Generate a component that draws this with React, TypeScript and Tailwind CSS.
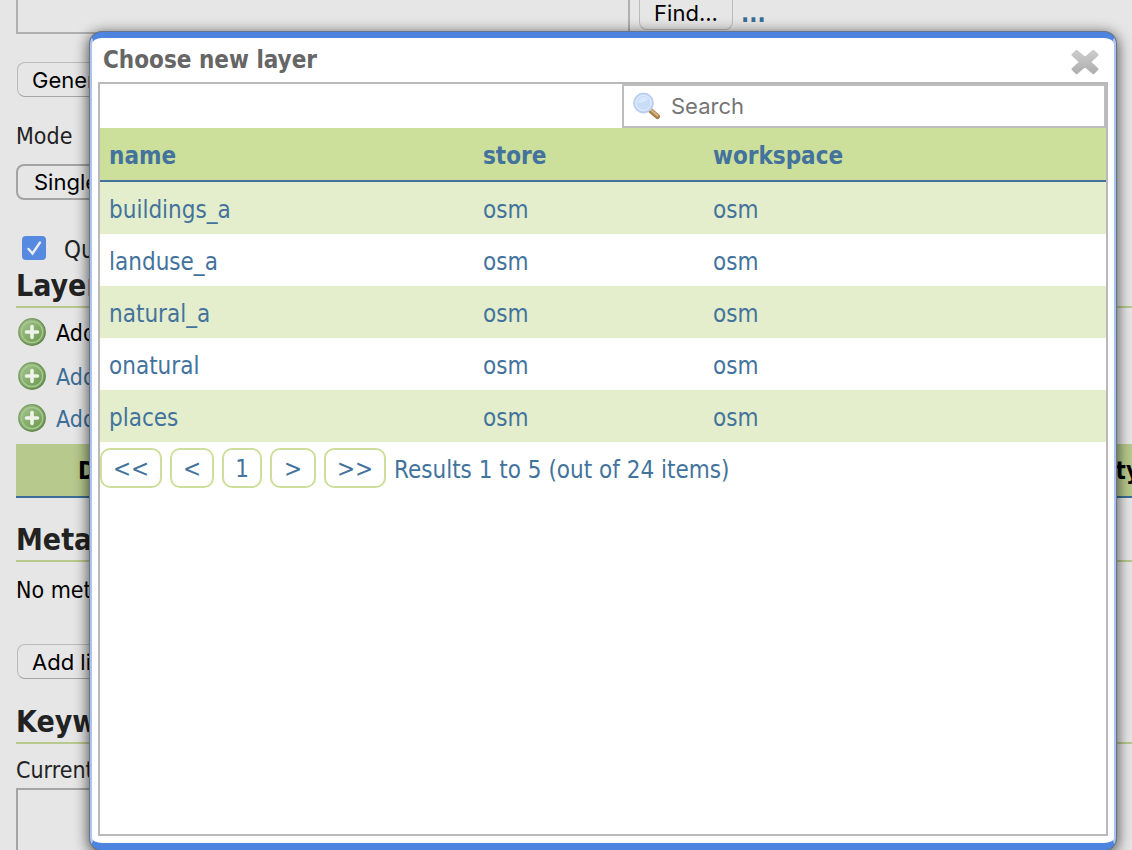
import type { ReactNode } from "react";

const ui = "font-['Inter',sans-serif]";
const layers = ["buildings_a", "landuse_a", "natural_a", "onatural", "places"];
const pages = [
  { label: "<<", width: "w-[62px]" },
  { label: "<", width: "w-11" },
  { label: "1", width: "w-10" },
  { label: ">", width: "w-[46px]" },
  { label: ">>", width: "w-[62px]" },
];

function PlusIcon() {
  return (
    <svg width="28" height="28" viewBox="0 0 28 28" aria-hidden="true">
      <defs>
        <linearGradient id="plusFill" x1="0" y1="0" x2="1" y2="1">
          <stop offset="0" stopColor="#a3c48c" />
          <stop offset="1" stopColor="#69984b" />
        </linearGradient>
        <linearGradient id="plusRing" x1="0" y1="0" x2="1" y2="1">
          <stop offset="0" stopColor="#86aa70" />
          <stop offset="1" stopColor="#5a8142" />
        </linearGradient>
      </defs>
      <circle cx="14" cy="14" r="13.2" fill="url(#plusFill)" stroke="url(#plusRing)" strokeWidth="1.4" />
      <circle cx="14" cy="14" r="10.6" fill="url(#plusFill)" stroke="#a9c896" strokeWidth="1.2" />
      <path d="M14 8.500v11M8.500 14h11" stroke="#eff3ec" strokeWidth="3.600" strokeLinecap="round" />
    </svg>
  );
}

function SearchIcon() {
  return (
    <svg width="28" height="28" viewBox="0 0 28 28" className="shrink-0" aria-hidden="true">
      <path d="M17.5 18.5l7 6" stroke="#a9804c" strokeWidth="5" strokeLinecap="round" />
      <path d="M17.5 17.5l7 5.900" stroke="#d7b689" strokeWidth="2" strokeLinecap="round" />
      <circle cx="10.500" cy="11" r="9.400" fill="#c3d9f6" stroke="#bccff0" strokeWidth="2" />
      <circle cx="10.500" cy="11" r="7.600" fill="#c8dcf7" stroke="#dfeafb" strokeWidth="1.400" />
      <path d="M5 11a6 6 0 0 1 10-4.500c-2 3.500-5.500 4.500-10 4.500z" fill="#d9e7fa" />
    </svg>
  );
}

function CloseIcon() {
  return (
    <svg width="30" height="28" viewBox="0 0 30 28" aria-hidden="true">
      <defs>
        <linearGradient id="closeFill" x1="0" y1="0" x2="0" y2="28" gradientUnits="userSpaceOnUse">
          <stop offset="0" stopColor="#d0d0d0" />
          <stop offset="1" stopColor="#ababab" />
        </linearGradient>
      </defs>
      <path
        d="M6.500 3L15 10.200l8.500-7.200 3.800 3.800L19.500 14l7.800 7.200-3.800 3.800L15 17.800 6.500 25l-3.800-3.800L10.500 14 2.700 6.800z"
        fill="url(#closeFill)"
        stroke="url(#closeFill)"
        strokeWidth="2.400"
        strokeLinejoin="round"
      />
    </svg>
  );
}

function Heading({ children }: { children: ReactNode }) {
  return (
    <h2 className="h-11 border-b-2 border-[#b7c98c] text-[30px] leading-[44px] font-bold text-[#222]">{children}</h2>
  );
}

function PageButton({ children }: { children: ReactNode }) {
  return (
    <button
      className={`${ui} ml-px block h-[35px] rounded-lg border border-[#bababa] border-b-[#a5a5a5] px-[14px] text-[22px] leading-8 text-black`}
    >
      {children}
    </button>
  );
}

function BackgroundPage() {
  return (
    <main className="pl-4">
      <div className="flex h-[34px] items-start">
        <textarea
          aria-label="Coordinate reference system"
          className="h-[34px] w-[614px] resize-none border-2 border-t-0 border-[#b0b0b0] bg-transparent"
        />
        <button
          className={`${ui} ml-[9px] h-[30px] w-[94px] rounded-b-lg border border-t-0 border-[#bababa] pb-1 text-[22px] leading-6 text-black`}
        >
          Find...
        </button>
        <a href="#crs" className="ml-2 text-2xl leading-7 font-bold text-[#3b6d96]">
          ...
        </a>
      </div>

      <div className="mt-7">
        <PageButton>Generate Bounds</PageButton>
      </div>

      <label htmlFor="mode" className="mt-5 block h-[35px] text-[23px] leading-[38px] text-[#222]">
        Mode
      </label>
      <select
        id="mode"
        defaultValue="Single"
        className={`${ui} mt-3 block h-9 w-48 appearance-none rounded-lg border-2 border-[#a3a3a3] bg-transparent px-4 text-[22px] leading-8 text-black`}
      >
        <option>Single</option>
      </select>

      <div className="mt-8 flex h-8 items-center pl-1.5">
        <span className="relative flex size-6">
          <input
            id="queryable"
            type="checkbox"
            defaultChecked
            className="size-6 appearance-none rounded-[4px] bg-[#5689e0]"
          />
          <svg viewBox="0 0 24 24" className="pointer-events-none absolute inset-0 size-6" aria-hidden="true">
            <path d="M6.500 13l4 4.500L18 6.500" fill="none" stroke="#ececec" strokeWidth="2.400" strokeLinecap="round" />
          </svg>
        </span>
        <label htmlFor="queryable" className="ml-[18px] pt-1 text-2xl leading-8 text-[#222]">
          Queryable
        </label>
      </div>

      <Heading>Layers</Heading>
      <ul className="pt-0.5 text-[23px] text-[#3b6d96]">
        <li className="flex h-11 items-center gap-2.5 pl-0.5">
          <PlusIcon />
          <a href="#layer" className="pt-0.5 text-black">
            Add Layer...
          </a>
        </li>
        <li className="flex h-11 items-center gap-2.5 pl-0.5">
          <PlusIcon />
          <a href="#group" className="pt-0.5">
            Add Layer Group...
          </a>
        </li>
        <li className="flex h-10 items-center gap-2.5 pl-0.5">
          <PlusIcon />
          <a href="#style" className="pt-0.5">
            Add Style Group...
          </a>
        </li>
      </ul>

      <table className="mt-1.5 w-[calc(100%+8px)] border-separate border-spacing-0 text-2xl font-bold text-black">
        <thead>
          <tr className="h-[54px] bg-[#b7c98c]">
            <th className="border-b-2 border-[#3b6d96] pt-0.5 pl-[62px] text-left">Drawing order</th>
            <th className="border-b-2 border-[#3b6d96] pt-0.5 text-right">Opacity</th>
          </tr>
        </thead>
      </table>

      <div className="mt-5">
        <Heading>Metadata links</Heading>
      </div>
      <p className="mt-2.5 text-[23px] leading-9 text-black">No metadata links so far</p>
      <div className="mt-9">
        <PageButton>Add link</PageButton>
      </div>

      <div className="mt-[21px]">
        <Heading>Keywords</Heading>
      </div>
      <label htmlFor="keywords" className="mt-2 block h-9 text-[23px] leading-9 text-[#222]">
        Current Keywords
      </label>
      <textarea
        id="keywords"
        className="block h-24 w-96 resize-none border-2 border-[#a5a5a5] bg-transparent"
      />
    </main>
  );
}

function LayerDialog() {
  return (
    <section
      role="dialog"
      aria-labelledby="dialog-title"
      className="absolute inset-x-4 top-8 bottom-0 left-[90px] flex flex-col rounded-[12px] border-x-2 border-t-[6px] border-b-[7px] border-x-[#a9c4f1] border-y-[#4d84e0] bg-white px-1.5 pb-[7px] shadow-[0_0_0_1px_#667388,0_3px_14px_2px_rgba(0,0,0,0.65)]"
    >
      <header className="flex h-11 items-center justify-between pr-2 pl-[5px]">
        <h1 id="dialog-title" className="text-2xl font-bold text-[#666]">
          Choose new layer
        </h1>
        <button aria-label="Close" className="pt-1">
          <CloseIcon />
        </button>
      </header>
      <div className="flex-1 border-2 border-[#b9b9b9] text-[#43739c]">
        <div className="flex h-11 justify-end">
          <label className="flex w-[484px] items-center gap-2.5 border-2 border-[#bdbdbd] pl-[9px]">
            <SearchIcon />
            <input
              aria-label="Search"
              placeholder="Search"
              className={`${ui} w-full text-[22px] outline-none placeholder:text-[#757575]`}
            />
          </label>
        </div>
        <table className="w-full table-fixed border-separate border-spacing-0 text-2xl">
          <colgroup>
            <col className="w-[374px]" />
            <col className="w-[230px]" />
            <col />
          </colgroup>
          <thead>
            <tr className="h-[54px] bg-[#ccdf9b] text-left">
              <th className="border-b-2 border-[#43739c] px-[9px] pt-1">name</th>
              <th className="border-b-2 border-[#43739c] px-[9px] pt-1">store</th>
              <th className="border-b-2 border-[#43739c] px-[9px] pt-1">workspace</th>
            </tr>
          </thead>
          <tbody>
            {layers.map((name) => (
              <tr key={name} className="h-[52px] odd:bg-[#e4eecd]">
                <td className="px-[9px] pt-1">
                  <a href={`#${name}`}>{name}</a>
                </td>
                <td className="px-[9px] pt-1">osm</td>
                <td className="px-[9px] pt-1">osm</td>
              </tr>
            ))}
          </tbody>
        </table>
        <nav aria-label="Pages" className="mt-1.5 flex h-10 items-center gap-2 text-2xl">
          {pages.map((page) => (
            <button
              key={page.label}
              className={`${page.width} h-10 rounded-[10px] border-2 border-[#ccdf9b] pt-0.5 leading-8`}
            >
              {page.label}
            </button>
          ))}
          <span className="pt-1">Results 1 to 5 (out of 24 items)</span>
        </nav>
      </div>
    </section>
  );
}

export default function App() {
  return (
    <div className="relative h-screen overflow-hidden bg-[#e6e6e6] font-['DejaVu_Sans_Condensed','Noto_Sans',sans-serif] whitespace-nowrap">
      <BackgroundPage />
      <LayerDialog />
    </div>
  );
}
